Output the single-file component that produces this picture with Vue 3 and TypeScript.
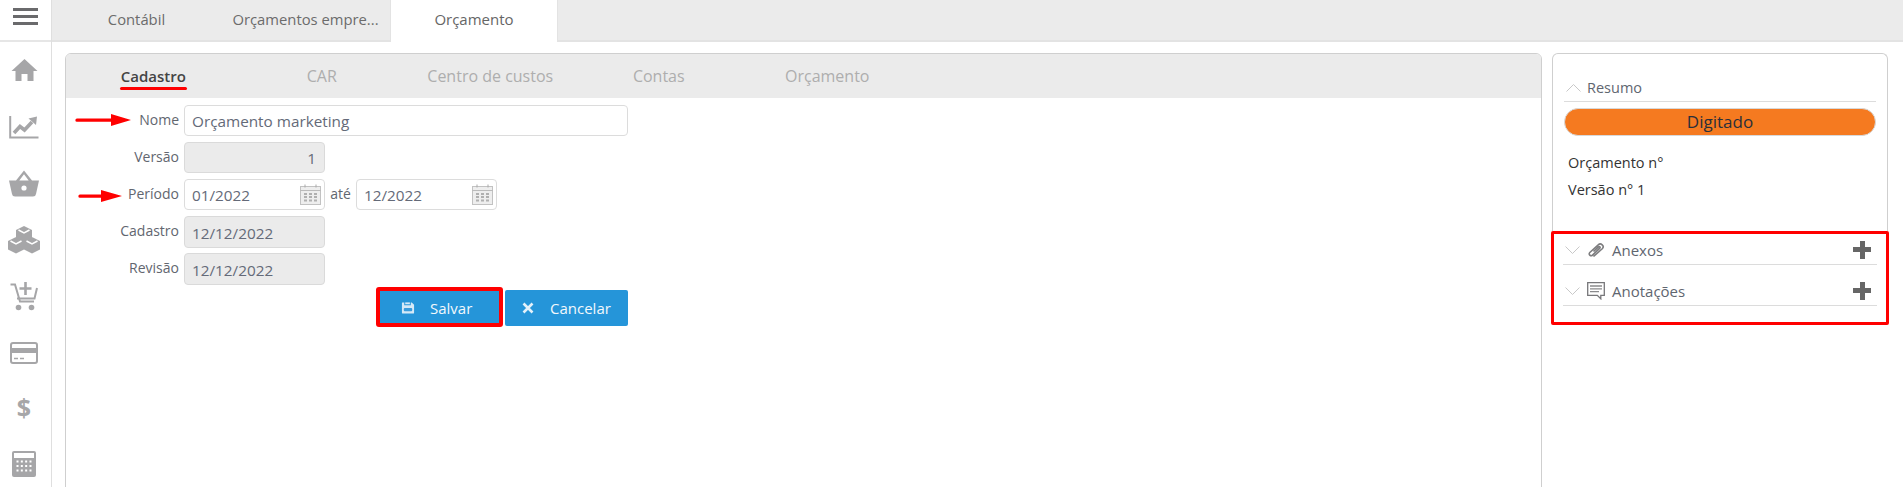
<script setup lang="ts">
const topTabs: string[] = ['Contábil', 'Orçamentos empre...', 'Orçamento']
const innerTabs: string[] = ['Cadastro', 'CAR', 'Centro de custos', 'Contas', 'Orçamento']
</script>

<template>
  <div class="app">
    <aside class="side">
      <div class="burger"><i></i><i></i><i></i></div>
      <nav class="side-icons">
        <div class="slot">
          <svg width="27" height="24" viewBox="0 0 27 24"><path d="M13.5 1 0.5 13h4v10h6v-7h6v7h6V13h4z" fill="#a6a6a8"/></svg>
        </div>
        <div class="slot">
          <svg width="30" height="24" viewBox="0 0 30 24" fill="none"><path d="M1.2 1v21.5H29.5" stroke="#a6a6a8" stroke-width="2"/><path d="M5 18l6-6.5 4.500 3.500 7.500-8" stroke="#a6a6a8" stroke-width="3.600"/><path d="M19.500 3.500 28 1.500l-1 8.500z" fill="#a6a6a8"/></svg>
        </div>
        <div class="slot">
          <svg width="30" height="27" viewBox="0 0 30 27"><path d="M15 0.500 7 10.500H0l3 13.500q.4 2.500 3 2.500h18q2.600 0 3-2.500L30 10.500h-7zM15 4.200l4.700 6.300h-9.400z" fill="#a6a6a8"/><circle cx="15" cy="18" r="2.600" fill="#fff"/></svg>
        </div>
        <div class="slot">
          <svg width="32" height="28" viewBox="0 0 32 28"><path d="M16 0l8 4v8.500l-8 4-8-4V4zM8 11l8 4v8.500l-8 4-8-4V15zM24 11l8 4v8.500l-8 4-8-4V15z" fill="#a6a6a8"/><path d="M10.500 4l5.500 2.800L21.500 4M2.500 15l5.500 2.800L13.500 15M18.500 15l5.500 2.800 5.500-2.800" stroke="#fff" stroke-width="1.500" fill="none"/></svg>
        </div>
        <div class="slot">
          <svg width="28" height="29" viewBox="0 0 28 29" fill="none"><path d="M0.500 2.500h4.500l5 17h14" stroke="#a6a6a8" stroke-width="2"/><path d="M7 16.500h17.500L27 6" stroke="#a6a6a8" stroke-width="2"/><path d="M15.500 0v13M9.500 6.500h12" stroke="#a6a6a8" stroke-width="2.600"/><circle cx="8.500" cy="25.500" r="2.800" fill="#a6a6a8"/><circle cx="21.500" cy="25.500" r="2.800" fill="#a6a6a8"/></svg>
        </div>
        <div class="slot">
          <svg width="28" height="22" viewBox="0 0 28 22" fill="none"><rect x="1" y="1" width="26" height="20" rx="2" stroke="#a6a6a8" stroke-width="2"/><path d="M1 8.500h26" stroke="#a6a6a8" stroke-width="5"/><path d="M4 16.500h4M10 16.500h4" stroke="#a6a6a8" stroke-width="1.600"/></svg>
        </div>
        <div class="slot dollar-slot">
          <span class="dollar">$</span>
        </div>
        <div class="slot calc-slot">
          <svg width="24" height="26" viewBox="0 0 24 26"><rect width="24" height="26" rx="2" fill="#a6a6a8"/><rect x="2" y="2" width="20" height="5" fill="#fff"/><path d="M4.500 10.500h15M4.500 15h15M4.500 19.500h15" stroke="#fff" stroke-width="2" stroke-dasharray="2 2.330"/></svg>
        </div>
      </nav>
    </aside>

    <div class="content">
      <header class="top-tabs">
        <div v-for="(t, i) in topTabs" :key="t" class="top-tab" :class="{ active: i === 2 }">{{ t }}</div>
      </header>

      <div class="workspace">
        <section class="main-panel">
          <div class="inner-tabs">
            <div v-for="(t, i) in innerTabs" :key="t" class="inner-tab" :class="{ current: i === 0 }">
              <span class="inner-label">{{ t }}</span>
            </div>
          </div>

          <div class="form">
            <div class="row">
              <svg class="arrow arrow-nome" width="56" height="14" viewBox="0 0 56 14"><path d="M2 5.500h34V1l20 6-20 6V8.800H2a1.650 1.650 0 0 1 0-3.300z" fill="#f00"/></svg>
              <label>Nome</label>
              <input class="field wide" value="Orçamento marketing" />
            </div>
            <div class="row">
              <label>Versão</label>
              <input class="field short off right" value="1" readonly />
            </div>
            <div class="row">
              <svg class="arrow arrow-periodo" width="44" height="14" viewBox="0 0 44 14"><path d="M2 5.500h21V1l21 6-21 6V8.800H2a1.650 1.650 0 0 1 0-3.300z" fill="#f00"/></svg>
              <label>Período</label>
              <div class="date-box">
                <input class="field short" value="01/2022" />
                <svg class="cal" width="21" height="21" viewBox="0 0 21 21" fill="none"><rect x=".5" y="2.500" width="20" height="18" fill="#eee" stroke="#c2c2c2"/><path d="M0 6.500h21" stroke="#bbb"/><path d="M5 .5v3M16 .5v3" stroke="#aaa"/><path d="M4 10h3M9 10h3M14 10h3M4 13h3M9 13h3M14 13h3M4 16.500h3M9 16.500h3M14 16.500h3" stroke="#b0b0b0" stroke-width="2"/></svg>
              </div>
              <span class="ate">até</span>
              <div class="date-box">
                <input class="field short" value="12/2022" />
                <svg class="cal" width="21" height="21" viewBox="0 0 21 21" fill="none"><rect x=".5" y="2.500" width="20" height="18" fill="#eee" stroke="#c2c2c2"/><path d="M0 6.500h21" stroke="#bbb"/><path d="M5 .5v3M16 .5v3" stroke="#aaa"/><path d="M4 10h3M9 10h3M14 10h3M4 13h3M9 13h3M14 13h3M4 16.500h3M9 16.500h3M14 16.500h3" stroke="#b0b0b0" stroke-width="2"/></svg>
              </div>
            </div>
            <div class="row tall">
              <label>Cadastro</label>
              <input class="field short off" value="12/12/2022" readonly />
            </div>
            <div class="row tall">
              <label>Revisão</label>
              <input class="field short off" value="12/12/2022" readonly />
            </div>
            <div class="actions">
              <button class="btn save" type="button">
                <svg width="14" height="14" viewBox="0 0 15 14"><path d="M1.500 1h2v3h7V1h1L14 3.500V12a1 1 0 0 1-1 1H2a1 1 0 0 1-1-1V1.500z" fill="#d5e9f7"/><path d="M4.500 1h5v2h-5z" fill="#d5e9f7"/><rect x="3" y="7" width="9" height="3.500" rx="1" fill="#3a9cdc"/></svg>
                <span>Salvar</span>
              </button>
              <button class="btn cancel" type="button">
                <svg width="12" height="12" viewBox="0 0 12 12"><path d="M1.500 1.500l9 9M10.500 1.500l-9 9" stroke="#e4f1fa" stroke-width="2.600"/></svg>
                <span>Cancelar</span>
              </button>
            </div>
          </div>
        </section>

        <aside class="info">
          <div class="info-top">
            <div class="acc-head">
              <svg class="chev" width="15" height="8" viewBox="0 0 15 8" fill="none"><path d="M.5 7.500l7-7 7 7" stroke="#c8c8c8"/></svg>
              <span class="acc-title resumo">Resumo</span>
            </div>
            <div class="badge">Digitado</div>
            <div class="meta">
              <p>Orçamento n°</p>
              <p>Versão n° 1</p>
            </div>
          </div>
          <div class="info-bottom">
            <div class="acc-head">
              <svg class="chev" width="15" height="8" viewBox="0 0 15 8" fill="none"><path d="M.5.5l7 7 7-7" stroke="#c8c8c8"/></svg>
              <svg class="acc-icon" width="18" height="18" viewBox="0 0 18 18" fill="none"><path d="M6.500 15.500 15.500 7.500c2.200-2.400-1.700-6-4-3.800L2.800 11.500c-1.800 1.800.9 4.300 2.700 2.600l7.300-7c.8-.9-.4-2-1.300-1.300L6.500 10.500" stroke="#7d7d7f" stroke-width="1.600"/></svg>
              <span class="acc-title">Anexos</span>
              <span class="plus"></span>
            </div>
            <div class="acc-head">
              <svg class="chev" width="15" height="8" viewBox="0 0 15 8" fill="none"><path d="M.5.500l7 7 7-7" stroke="#c8c8c8"/></svg>
              <svg class="acc-icon" width="18" height="18" viewBox="0 0 18 18" fill="none"><path d="M.7.700h16.600v12.600h-3.500v3.500l-3.500-3.500H.7z" fill="#fff" stroke="#77777a" stroke-width="1.300"/><path d="M3 4h12M3 6.800h12M3 9.600h9" stroke="#8a8a8c" stroke-width="1.300"/></svg>
              <span class="acc-title">Anotações</span>
              <span class="plus"></span>
            </div>
          </div>
        </aside>
      </div>
    </div>
  </div>
</template>

<style>
html, body { margin: 0; height: 487px; overflow: hidden; background: #fff; }
</style>

<style scoped>
.app {
  display: flex;
  height: 487px;
  width: 1903px;
  overflow: hidden;
  font-family: "Open Sans", "Noto Sans", sans-serif;
  font-size: 14px;
  color: #5f6670;
  background: #fff;
}
.side {
  flex: 0 0 52px;
  box-sizing: border-box;
  border-right: 1px solid #dfdfdf;
}
.burger {
  box-sizing: border-box;
  height: 42px;
  border-bottom: 2px solid #e6e6e6;
  display: flex;
  flex-direction: column;
  align-items: center;
  gap: 4.500px;
  padding-top: 8px;
}
.burger i {
  display: block;
  width: 25px;
  height: 2.500px;
  background: #6a6a6c;
}
.side-icons { display: flex; flex-direction: column; }
.slot {
  height: 56.500px;
  display: flex;
  align-items: center;
  justify-content: center;
  flex: none;
  padding-right: 3px;
  box-sizing: border-box;
}
.dollar-slot, .calc-slot { transform: translateY(-2px); }
.dollar {
  font-family: "Open Sans", sans-serif;
  font-size: 25px;
  font-weight: 700;
  color: #a6a6a8;
  line-height: 1;
}
.content {
  flex: 1;
  display: flex;
  flex-direction: column;
  min-width: 0;
}
.top-tabs {
  display: flex;
  height: 42px;
  flex: none;
  box-sizing: border-box;
  background: #ebebeb;
  border-bottom: 2px solid #e3e3e3;
}
.top-tab {
  width: 169px;
  text-align: center;
  line-height: 39px;
  font-size: 14.800px;
  color: #6c6c6c;
  white-space: nowrap;
}
.top-tab.active {
  background: #fff;
  height: 42px;
  border-left: 1px solid #e3e3e3;
  border-right: 1px solid #e3e3e3;
  box-sizing: border-box;
  width: 168px;
  color: #666;
  font-size: 15px;
}
.workspace {
  flex: 1;
  display: flex;
  align-items: flex-start;
  gap: 10px;
  padding: 11px 15px 0 13px;
  min-height: 0;
}
.main-panel {
  flex: 1;
  height: 460px;
  box-sizing: border-box;
  border: 1px solid #cfcfcf;
  border-radius: 6px 6px 0 0;
  overflow: hidden;
}
.inner-tabs {
  display: flex;
  height: 44px;
  background: #ebebeb;
  padding-left: 3px;
}
.inner-tab {
  width: 168.500px;
  text-align: center;
  line-height: 45px;
  font-size: 16px;
  color: #aeaeae;
}
.inner-tab.current { color: #444; font-weight: 600; font-size: 15px; }
.inner-label { position: relative; display: inline-block; }
.inner-tab.current .inner-label::after {
  content: "";
  position: absolute;
  left: -1px;
  right: -1px;
  top: 33px;
  height: 3px;
  border-radius: 2px;
  background: #f00;
}
.form {
  position: relative;
  padding: 7px 0 0 0;
  width: 562px;
}
.row {
  position: relative;
  display: flex;
  align-items: flex-start;
  height: 31px;
  margin-bottom: 6px;
}
.row.tall { height: 32px; margin-bottom: 5px; }
.row label {
  width: 113px;
  flex: none;
  text-align: right;
  margin-right: 5px;
  line-height: 30px;
  font-size: 14px;
  color: #62666f;
}
.field {
  box-sizing: border-box;
  height: 100%;
  border: 1px solid #dcdcdc;
  border-radius: 4px;
  padding: 1px 7px 0;
  font-family: inherit;
  font-size: 15.300px;
  color: #646a78;
  background: #fff;
  outline: none;
  margin: 0;
}
.row.tall .field { height: 32px; }
.wide { width: 444px; height: 31px; }
.short { width: 141px; height: 31px; }
.off { background: #ebebeb; border-color: #dadada; }
.right { text-align: right; padding-right: 8px; }
.date-box { position: relative; width: 141px; height: 31px; flex: none; }
.cal { position: absolute; right: 4px; top: 5px; }
.ate { width: 31px; flex: none; text-align: center; line-height: 30px; font-size: 14px; }
.arrow { position: absolute; }
.arrow-nome { left: 9px; top: 8px; }
.arrow-periodo { left: 12px; top: 10px; }
.actions {
  display: flex;
  justify-content: flex-end;
  gap: 5px;
  margin-top: 5px;
}
.btn {
  box-sizing: border-box;
  height: 36px;
  border: 0;
  border-radius: 2px;
  background: #2595d9;
  color: #f2f8fc;
  font-family: inherit;
  font-size: 15px;
  display: flex;
  align-items: center;
  justify-content: flex-start;
  padding: 0 0 0 22px;
  position: relative;
}
.save { width: 121px; gap: 15px; }
.save::after {
  content: "";
  position: absolute;
  inset: -3px -3px -1px;
  border: 4px solid #f00;
  border-radius: 3px;
}
.cancel { width: 123px; gap: 16px; padding-left: 17px; }
.info {
  flex: 0 0 336px;
  box-sizing: border-box;
}
.info-top {
  box-sizing: border-box;
  height: 178px;
  border: 1px solid #cfcfcf;
  border-bottom: 0;
  border-radius: 6px 6px 0 0;
  padding: 20px 11px 0;
}
.acc-head {
  display: flex;
  align-items: center;
  height: 27px;
  border-bottom: 1px solid #dcdcdc;
  padding-left: 2px;
}
.chev { flex: none; margin-right: 7px; }
.acc-title { font-size: 15px; color: #5f6670; white-space: nowrap; }
.acc-title.resumo { font-size: 14.500px; margin-left: -1px; }
.acc-icon { flex: none; margin-right: 7px; }
.badge {
  margin-top: 6px;
  height: 28px;
  line-height: 26px;
  box-sizing: border-box;
  border: 1px solid #d8d8d8;
  border-radius: 14px;
  background: #f57a20;
  text-align: center;
  font-size: 17px;
  color: #2a2f3a;
}
.meta { padding: 17px 4px 0; }
.meta p {
  margin: 0 0 7px;
  line-height: 20px;
  font-size: 14.500px;
  color: #333;
}
.info-bottom {
  box-sizing: border-box;
  height: 94px;
  margin: 0 -1px;
  border: 3px solid #f00;
  border-radius: 2px;
  padding: 3px 9px 0;
  display: flex;
  flex-direction: column;
  gap: 13px;
}
.info-bottom .acc-head { height: 28px; flex: none; padding-bottom: 2px; box-sizing: border-box; }
.plus {
  margin-left: auto;
  margin-right: 6px;
  width: 18px;
  height: 18px;
  flex: none;
  background:
    linear-gradient(#666, #666) center / 18px 5px no-repeat,
    linear-gradient(#666, #666) center / 5px 18px no-repeat;
}
</style>
